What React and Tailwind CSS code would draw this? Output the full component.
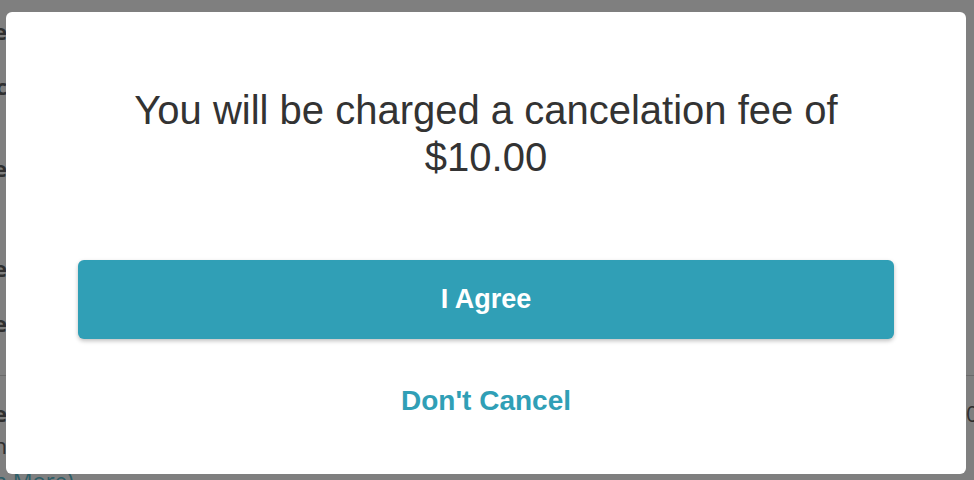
const rows = [
  { text: 'Appointment type', top: 'mt-[19px]' },
  { text: 'Clinic', top: 'mt-[31px]' },
  { text: 'Date & time', top: 'mt-[58px]' },
  { text: 'Provider name', top: 'mt-[76px]' },
  { text: 'Location name here', top: 'mt-[31px]' },
];

const Clip = ({ children, className = '' }) => (
  <div className={`w-[7px] overflow-hidden flex justify-end whitespace-nowrap ${className}`}>
    {children}
  </div>
);

export default function App() {
  return (
    <div
      className="relative w-[974px] h-[480px] overflow-hidden bg-white text-[#333333]"
      style={{ fontFamily: '"Liberation Sans", Arial, sans-serif' }}
    >
      {/* Page behind the dialog */}
      <div className="flex flex-col text-[#5e5e5e]" style={{ fontFamily: '"Open Sans", sans-serif' }}>
        {rows.map((r) => (
          <Clip key={r.text} className={`${r.top} text-[22px] font-bold leading-[24px]`}>
            <span>{r.text}</span>
          </Clip>
        ))}
        <div className="mt-[40px] border-t border-[#d4d4d4]"></div>
        <div className="flex justify-between mt-[25px]">
          <Clip className="text-[22px] font-bold leading-[24px]">
            <span>Cancelation fee</span>
          </Clip>
          <div className="w-[8px] overflow-hidden text-[22px] leading-[24px] whitespace-nowrap">
            <span>0.00</span>
          </div>
        </div>
        <Clip className="mt-[8px] text-[22px] leading-[24px]">
          <span>Cancelation</span>
        </Clip>
        <div className="mt-[11px] -ml-[58px] text-[22px] leading-[24px] text-[#5cbcd0] whitespace-nowrap">
          (Learn More)
        </div>
      </div>

      {/* Dialog overlay */}
      <div className="absolute inset-0 bg-black/50 flex pt-[12px] pl-[6px] pr-[8px] pb-[6px]">
        <div className="flex-1 bg-white rounded-[6px] flex flex-col items-center pt-[75px] px-[72px]">
          <h2 className="text-[40px] leading-[47px] text-center text-[#333333] font-normal">
            You will be charged a cancelation fee of $10.00
          </h2>
          <button className="mt-[79px] w-full h-[79px] rounded-[6px] bg-[#309fb6] text-white font-bold text-[27px] shadow-[0_2px_4px_rgba(0,0,0,0.25)]">
            I Agree
          </button>
          <button className="mt-[46px] text-[#309fb6] font-bold text-[28px] leading-[32px]">
            Don't Cancel
          </button>
        </div>
      </div>
    </div>
  );
}
